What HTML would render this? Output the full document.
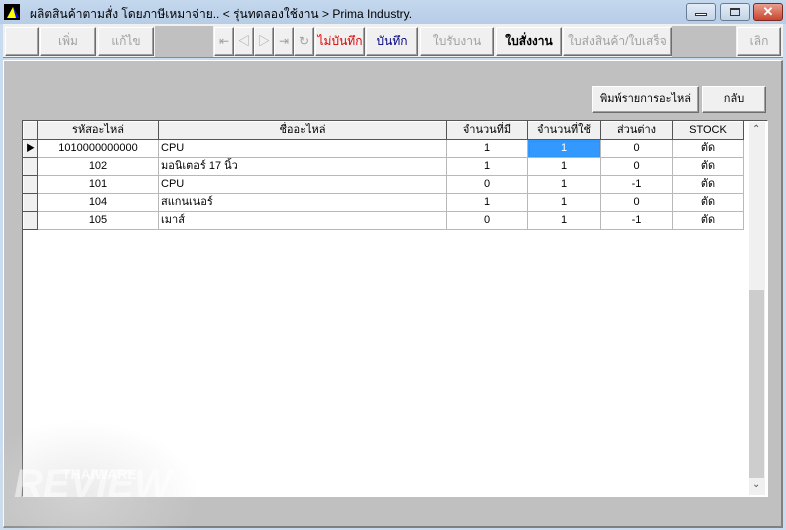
<!DOCTYPE html>
<html><head><meta charset="utf-8"><style>
*{box-sizing:border-box;margin:0;padding:0}
body{width:786px;height:530px;overflow:hidden;background:#c9dcef;font-family:"Liberation Sans","Noto Sans CJK SC",sans-serif;font-size:11px;position:relative}
.a{position:absolute}
.title{left:0;top:0;width:786px;height:24px;background:linear-gradient(#c4d8ee,#b7cde6)}
.btn{position:absolute;top:27px;height:29px;background:#f0f0f0;border:1px solid;border-color:#fff #6d6d6d #6d6d6d #fff;box-shadow:inset -1px -1px 0 #a0a0a0;text-align:center;line-height:27px;font-size:12px;color:#a0a0a0}
.wb{position:absolute;top:3px;height:18px;border:1px solid #6a7c93;border-radius:3px;background:linear-gradient(#e3edf7,#c3d3e6)}
table{border-collapse:collapse;position:absolute;left:23px;top:121px;table-layout:fixed}
td,th{height:18px;line-height:15px;font-size:11px;padding:0 2px;white-space:nowrap;overflow:hidden}
td{border:1px solid #b8b8b8;text-align:center}
th{background:#f0f0f0;font-weight:normal;border:1px solid #555;border-color:#fff #555 #555 #fff}
td.rh{background:#f0f0f0;border-color:#fff #555 #555 #fff}
td.l{text-align:left}
</style></head><body>
<div class="a title"></div>
<div class="a" style="left:4px;top:4px;width:16px;height:16px;background:#000"></div>
<svg class="a" style="left:4px;top:4px" width="16" height="16"><polygon points="3,14 9,3 15,14" fill="#ff0"/><polygon points="9,3 15,14 12,14" fill="#00f"/></svg>
<div class="a" style="left:30px;top:5px;font-size:12px;color:#000">ผลิตสินค้าตามสั่ง โดยภาษีเหมาจ่าย.. &lt; รุ่นทดลองใช้งาน &gt; Prima Industry.</div>
<div class="wb" style="left:686px;width:30px"><div class="a" style="left:8px;top:9px;width:12px;height:3px;background:#fff;border:1px solid #333"></div></div>
<div class="wb" style="left:720px;width:30px"><div class="a" style="left:9px;top:4px;width:10px;height:8px;border:1px solid #333;border-top-width:2px"></div></div>
<div class="wb" style="left:753px;width:30px;background:linear-gradient(#e8a090,#c9452f);border-color:#7a2a20;color:#fff;text-align:center;font-weight:bold;line-height:15px;font-size:13px">✕</div>
<div class="a" style="left:3px;top:24px;width:780px;height:34px;background:#f0f0f0;border-bottom:1px solid #888"></div>
<div class="a" style="left:155px;top:26px;width:58px;height:31px;background:#c0c0c0"></div>
<div class="a" style="left:672px;top:26px;width:64px;height:31px;background:#c0c0c0"></div>
<div class="btn" style="left:5px;width:34px"></div>
<div class="btn" style="left:40px;width:56px">เพิ่ม</div>
<div class="btn" style="left:98px;width:56px">แก้ไข</div>
<div class="btn" style="left:214px;width:20px">⇤</div>
<div class="btn" style="left:234px;width:20px">◁</div>
<div class="btn" style="left:254px;width:20px">▷</div>
<div class="btn" style="left:274px;width:20px">⇥</div>
<div class="btn" style="left:294px;width:20px">↻</div>
<div class="btn" style="left:315px;width:50px;color:#e00000">ไม่บันทึก</div>
<div class="btn" style="left:366px;width:52px;color:#000080">บันทึก</div>
<div class="btn" style="left:420px;width:74px">ใบรับงาน</div>
<div class="btn" style="left:496px;width:66px;color:#000;font-weight:bold">ใบสั่งงาน</div>
<div class="btn" style="left:563px;width:109px">ใบส่งสินค้า/ใบเสร็จ</div>
<div class="btn" style="left:737px;width:44px">เลิก</div>
<div class="a" style="left:3px;top:60px;width:780px;height:468px;background:#c0c0c0;border-left:1px solid #fff;border-top:1px solid #fff;border-right:2px solid #808080;border-bottom:2px solid #808080"></div>
<div class="btn" style="left:592px;top:86px;width:107px;height:27px;color:#000;line-height:25px;font-size:11px">พิมพ์รายการอะไหล่</div>
<div class="btn" style="left:702px;top:86px;width:64px;height:27px;color:#000;line-height:25px;font-size:11px">กลับ</div>
<div class="a" style="left:22px;top:120px;width:746px;height:377px;background:#fff;border:1px solid;border-color:#555 #fff #fff #555"></div>
<div class="a" style="left:749px;top:122px;width:16px;height:373px;background:#f0f0f0"></div>
<div class="a" style="left:749px;top:290px;width:15px;height:188px;background:#cdcdcd"></div>
<div class="a" style="left:752px;top:124px;font-size:10px;color:#555">⌃</div>
<div class="a" style="left:752px;top:479px;font-size:10px;color:#555">⌄</div>
<table>
<colgroup><col style="width:14px"><col style="width:121px"><col style="width:288px"><col style="width:81px"><col style="width:73px"><col style="width:72px"><col style="width:71px"></colgroup>
<tr style="height:18px"><th></th><th>รหัสอะไหล่</th><th>ชื่ออะไหล่</th><th>จำนวนที่มี</th><th>จำนวนที่ใช้</th><th>ส่วนต่าง</th><th>STOCK</th></tr>
<tr style="height:18px"><td class="rh" style="font-size:9px;padding:0">▶</td><td>1010000000000</td><td class="l">CPU</td><td>1</td><td style="background:#3399ff;color:#fff;outline:1px dotted #c60;outline-offset:-2px">1</td><td>0</td><td>ตัด</td></tr>
<tr style="height:18px"><td class="rh"></td><td>102</td><td class="l">มอนิเตอร์ 17 นิ้ว</td><td>1</td><td>1</td><td>0</td><td>ตัด</td></tr>
<tr style="height:18px"><td class="rh"></td><td>101</td><td class="l">CPU</td><td>0</td><td>1</td><td>-1</td><td>ตัด</td></tr>
<tr style="height:18px"><td class="rh"></td><td>104</td><td class="l">สแกนเนอร์</td><td>1</td><td>1</td><td>0</td><td>ตัด</td></tr>
<tr style="height:18px"><td class="rh"></td><td>105</td><td class="l">เมาส์</td><td>0</td><td>1</td><td>-1</td><td>ตัด</td></tr>
</table>
<div class="a" style="left:0;top:420px;width:200px;height:110px;background:radial-gradient(ellipse at 40% 70%,rgba(220,220,220,0.6),rgba(255,255,255,0) 70%)"></div>
<div class="a" style="left:14px;top:462px;font-size:40px;font-style:italic;font-weight:bold;color:rgba(255,255,255,0.5)">REVIEW</div>
<div class="a" style="left:62px;top:466px;font-size:14px;font-weight:bold;color:rgba(255,255,255,0.7)">THAIWARE</div>
</body></html>
